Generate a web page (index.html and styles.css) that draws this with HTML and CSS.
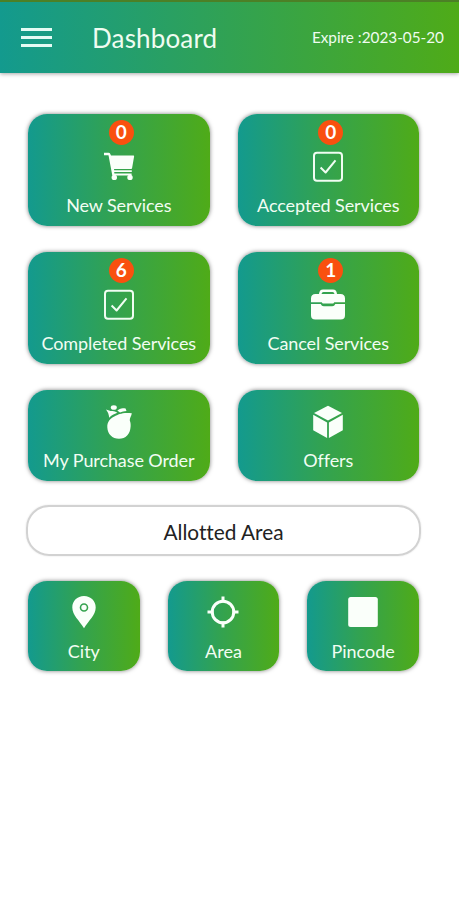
FILE: index.html
```html
<!DOCTYPE html>
<html lang="en">
<head>
<meta charset="utf-8">
<title>Dashboard</title>
<link rel="stylesheet" href="styles.css">
</head>
<body>
<header class="topbar">
  <button class="menu" aria-label="Menu"><span></span><span></span><span></span></button>
  <h1 class="title">Dashboard</h1>
  <span class="expire">Expire :2023-05-20</span>
</header>
<main class="content">
  <section class="grid">
    <a class="card">
      <span class="badge">0</span>
      <svg class="icon" viewBox="0 0 40 40"><path d="M5 6.800h4.600c.8 0 1.400.4 1.700 1.200l.7 1.500h22.200c.7 0 1 .5.900 1.100l-2 11.400c-.1.600-.6 1-1.200 1H15l.2 1.300h17.600v1.600H15.200l.2 1.600h17.200V29.500H13.300L9.500 9.300H5z"/><circle cx="15.300" cy="31.400" r="2.700"/><circle cx="31" cy="31.400" r="2.700"/></svg>
      <span class="label">New Services</span>
    </a>
    <a class="card">
      <span class="badge">0</span>
      <svg class="icon line" viewBox="0 0 40 40"><rect x="6" y="6.800" width="28" height="28" rx="3"/><path d="M12.600 21.500l5 5L27.500 14.300"/></svg>
      <span class="label">Accepted Services</span>
    </a>
    <a class="card">
      <span class="badge">6</span>
      <svg class="icon line" viewBox="0 0 40 40"><rect x="6" y="6.800" width="28" height="28" rx="3"/><path d="M12.600 21.500l5 5L27.500 14.300"/></svg>
      <span class="label">Completed Services</span>
    </a>
    <a class="card">
      <span class="badge">1</span>
      <svg class="icon" viewBox="0 0 40 40"><path fill-rule="evenodd" d="M3 18.200v-3.700Q3 10 7.500 10H11Q11.500 5.600 15 5.600h10Q28.500 5.600 29 10h3.500Q37 10 37 14.500v3.700H26.300l-1 1.200H14.700l-1-1.200zM13.500 10h13q-.3-2-2-2h-9q-1.700 0-2 2z"/><path d="M3 20h9.700q1 2.200 3 2.200h8.600q2 0 3-2.200H37v11.200q0 4.300-4.300 4.300H7.300Q3 35.500 3 31.200z"/></svg>
      <span class="label">Cancel Services</span>
    </a>
    <a class="card short">
      <svg class="icon" viewBox="0 0 40 40"><path d="M32.800 11.200c-.3 2.900-2.300 4.800-2 7.300.8 2 1 4 .8 6.200C31.200 32 26.700 36.700 20 36.700S8.600 32 8.300 25.200c-.2-5.500 3-8.700 7-10.700 4.600-2.300 7.700-4.300 17.500-3.300z"/><path d="M7 7.500c2.200.9 4.200 1.700 6.500 1.600 1.700.1 3.300.7 4.900 1.600-3.300 1.400-6 2.500-8.200 5-.3-3.300-1.200-5.500-3.200-8.200z"/><ellipse cx="14.800" cy="5.500" rx="3" ry="2.300"/><path d="M18.300 8.600c2-2.200 4.800-3 8.300-2.100l.9 2.500c-2.400.1-4.600.7-6.500 1.600z"/></svg>
      <span class="label">My Purchase Order</span>
    </a>
    <a class="card short">
      <svg class="icon" viewBox="0 0 40 40"><path d="M20 3.700l14 7.300-14 7.400L6 11z"/><path d="M5.200 12.800l13.900 7.600v15.700L5.200 28.300zM34.800 12.800l-13.900 7.600v15.700l13.900-7.800z"/></svg>
      <span class="label">Offers</span>
    </a>
  </section>
  <h2 class="allotted">Allotted Area</h2>
  <section class="grid areas">
    <a class="card small">
      <svg class="icon" viewBox="0 0 40 40"><path fill-rule="evenodd" d="M20 4C13.200 4 8.300 9 8.300 15.400 8.300 23 15.500 28.500 20 36.300c4.500-7.800 11.700-13.300 11.700-20.900C31.700 9 26.800 4 20 4zm0 7.200a4.300 4.300 0 1 1 0 8.600 4.300 4.300 0 0 1 0-8.600z"/><circle cx="20" cy="15.500" r="2.700"/></svg>
      <span class="label">City</span>
    </a>
    <a class="card small">
      <svg class="icon target" viewBox="0 0 40 40"><circle cx="20" cy="20" r="10.800"/><path d="M20 4.500v6M20 29.500v6M4.500 20h6M29.500 20h6"/></svg>
      <span class="label">Area</span>
    </a>
    <a class="card small">
      <svg class="icon" viewBox="0 0 40 40"><rect x="5.200" y="5" width="29.600" height="30" rx="2.500"/></svg>
      <span class="label">Pincode</span>
    </a>
  </section>
</main>
</body>
</html>
```
FILE: styles.css
```css
* { box-sizing: border-box; }

body {
  margin: 0;
  min-height: 900px;
  background: #fff;
  color: #222;
  font-family: Lato, "Liberation Sans", sans-serif;
  font-variant-ligatures: none;
}

.topbar {
  display: flex;
  align-items: center;
  height: 73px;
  padding: 0 15px 0 21px;
  border-top: 2px solid #4c8026;
  background: linear-gradient(90deg, #139a8e, #31a253 50%, #4fab18);
  box-shadow: 0 1px 4px rgba(0, 0, 0, .35);
  color: #effcf1;
}

.menu {
  display: flex;
  flex-direction: column;
  gap: 5px;
  width: 31px;
  padding: 0;
  border: 0;
  background: none;
}

.menu span { height: 3px; background: #e4fbf4; }

.title {
  margin: 0 0 0 40px;
  font-size: 26px;
  font-weight: 400;
  line-height: 32px;
  letter-spacing: .15px;
}

.expire {
  margin: 0 0 2px auto;
  font-size: 15.3px;
  line-height: 20px;
}

.content { padding: 41px 40px 0 28px; }

.grid {
  display: grid;
  grid-template-columns: 1fr 1fr;
  gap: 26px 28px;
}

.card {
  position: relative;
  display: flex;
  flex-direction: column;
  align-items: center;
  gap: 7px;
  height: 112px;
  padding-top: 32px;
  border-radius: 19px;
  background: linear-gradient(90deg, #139a8e, #31a253 45%, #4fab18);
  box-shadow: 0 0 4px rgba(0, 0, 0, .5);
  color: #f2fdf3;
}

.short { gap: 6px; height: 91px; padding-top: 12px; }

.badge {
  position: absolute;
  top: 6px;
  left: calc(50% - 10px);
  width: 25px;
  height: 25px;
  border-radius: 50%;
  background: #f9500f;
  color: #fff;
  font-size: 19px;
  font-weight: 700;
  line-height: 24px;
  text-align: center;
}

.icon { flex: none; width: 40px; height: 40px; fill: #fafffa; }

.line { fill: none; stroke: #f0fdf2; stroke-width: 2; stroke-linejoin: round; }

.target { fill: none; stroke: #fafffa; stroke-width: 3; }

.label {
  font-size: 18px;
  line-height: 24px;
  letter-spacing: -.1px;
  white-space: nowrap;
}

.allotted {
  height: 51px;
  margin: 24px -2px 25px;
  border: 2px solid #d2d2d2;
  border-radius: 23px;
  box-shadow: 0 0 2px rgba(0, 0, 0, .12);
  font-size: 20.8px;
  font-weight: 400;
  line-height: 49px;
  text-align: center;
}

.areas { grid-template-columns: repeat(3, 1fr); }

.small { height: 90px; padding-top: 11px; }

.small .label { letter-spacing: 0; }
```
